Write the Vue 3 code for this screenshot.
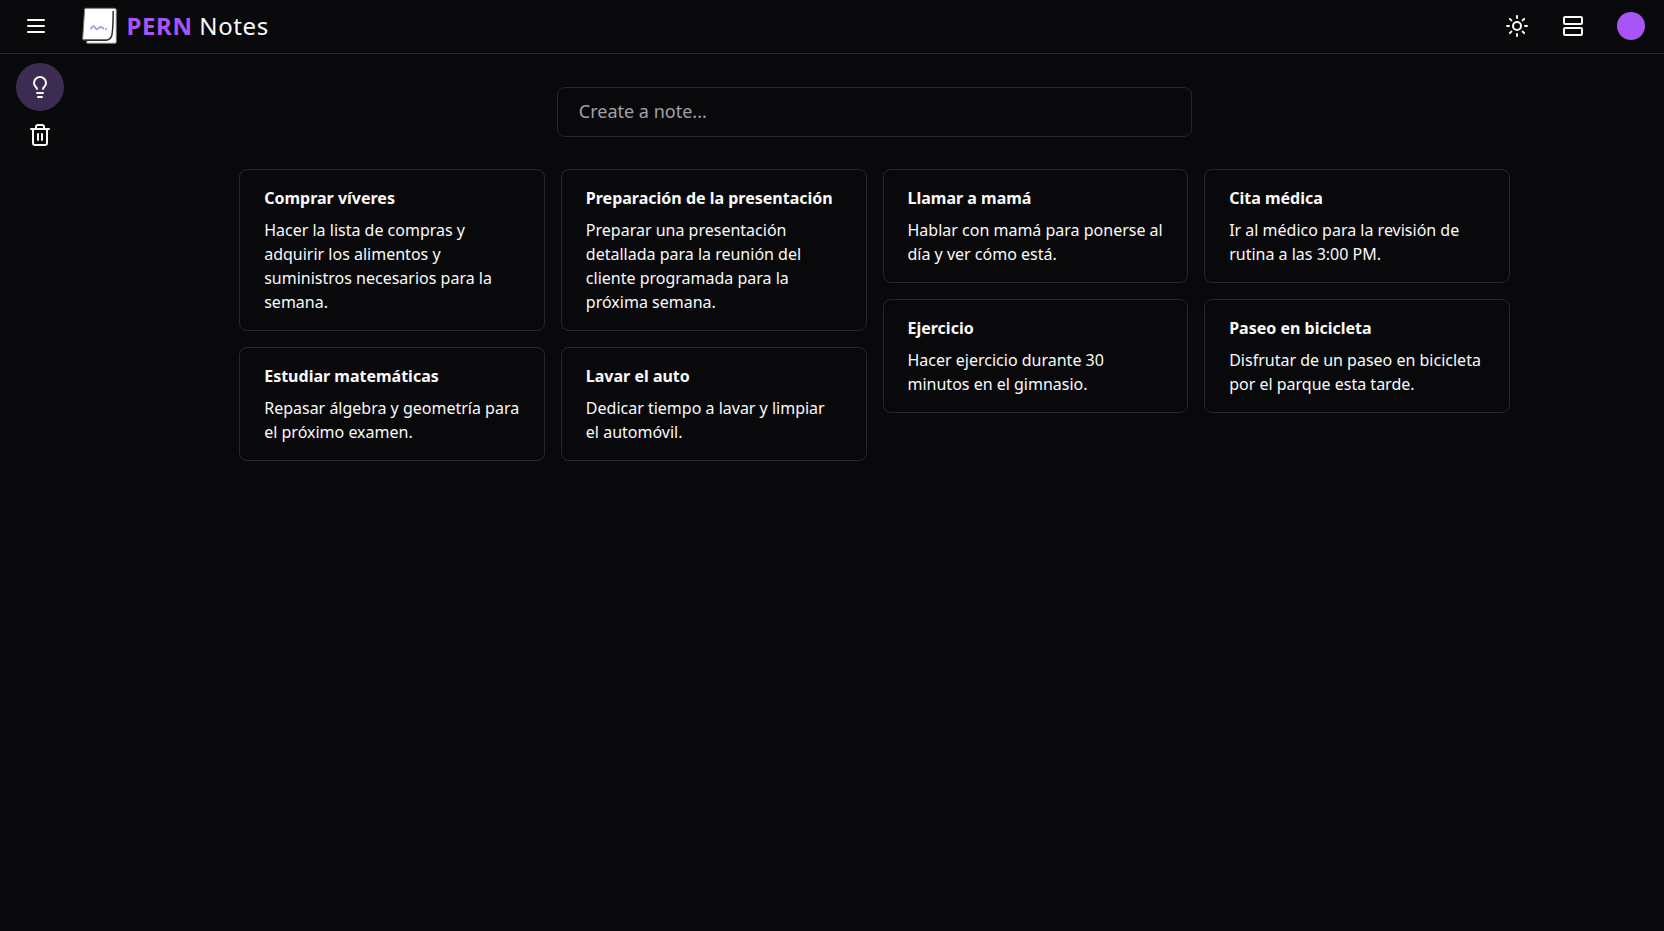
<script setup>
const columns = [
  [
    { title: 'Comprar víveres', body: 'Hacer la lista de compras y adquirir los alimentos y suministros necesarios para la semana.' },
    { title: 'Estudiar matemáticas', body: 'Repasar álgebra y geometría para el próximo examen.' },
  ],
  [
    { title: 'Preparación de la presentación', body: 'Preparar una presentación detallada para la reunión del cliente programada para la próxima semana.' },
    { title: 'Lavar el auto', body: 'Dedicar tiempo a lavar y limpiar el automóvil.' },
  ],
  [
    { title: 'Llamar a mamá', body: 'Hablar con mamá para ponerse al día y ver cómo está.' },
    { title: 'Ejercicio', body: 'Hacer ejercicio durante 30 minutos en el gimnasio.' },
  ],
  [
    { title: 'Cita médica', body: 'Ir al médico para la revisión de rutina a las 3:00 PM.' },
    { title: 'Paseo en bicicleta', body: 'Disfrutar de un paseo en bicicleta por el parque esta tarde.' },
  ],
]
</script>

<template>
  <div class="page">
    <header class="topbar">
      <button class="icon-btn" aria-label="Menu">
        <svg class="icon" viewBox="0 0 24 24">
          <path d="M4 6h16M4 12h16M4 18h16" />
        </svg>
      </button>
      <div class="brand">
        <svg class="logo" width="36" height="38" viewBox="0 0 36 38">
          <path d="M4.800 33V36.300H33Q34.300 36.300 34.300 35V3Q34.300 1.500 33 1.500H30Z" fill="#fff" stroke="#77777b" stroke-width="1" stroke-linejoin="round" />
          <path d="M3.800 1.300H32Q32.500 22 30.300 28.500Q28.500 33 24 33H1.800Q0.500 33 0.700 31.500L2.600 2.500Q2.700 1.300 3.800 1.300Z" fill="#fff" />
          <path d="M24 33H1.800Q0.500 33 0.700 31.500L2.600 2.500Q2.700 1.300 3.800 1.300H32" fill="none" stroke="#77777b" stroke-width="1" />
          <path d="M1.800 33.200H24Q28.500 33 29.800 28.500Q31 24 31.200 4.500" fill="none" stroke="#2d2d30" stroke-width="1.500" stroke-linecap="round" />
          <path d="M9 21.800Q11.200 17.800 12.500 19.800L14.500 22.300Q15.300 22.800 16.500 21.200Q18.500 18.800 20 20.800L21.300 21.400M23.800 21.900h0.600" fill="none" stroke="#b594ea" stroke-width="1.800" stroke-linecap="round" />
        </svg>
        <span class="name"><b>PERN</b> Notes</span>
      </div>
      <div class="actions">
        <button class="icon-btn" aria-label="Theme">
          <svg class="icon" viewBox="0 0 24 24">
            <circle cx="12" cy="12" r="4" />
            <path d="M12 2v2M12 20v2M4.930 4.930l1.410 1.410M17.660 17.660l1.410 1.410M2 12h2M20 12h2M6.340 17.660l-1.410 1.410M19.070 4.930l-1.410 1.410" />
          </svg>
        </button>
        <button class="icon-btn" aria-label="Layout">
          <svg class="icon" viewBox="0 0 24 24">
            <rect x="3" y="3" width="18" height="7" rx="1" />
            <rect x="3" y="14" width="18" height="7" rx="1" />
          </svg>
        </button>
        <div class="avatar"></div>
      </div>
    </header>

    <div class="content">
      <nav class="sidebar">
        <button class="nav-item active" aria-label="Notes">
          <svg class="icon" viewBox="0 0 24 24">
            <path d="M15 14c.2-1 .7-1.700 1.500-2.500 1-.9 1.500-2.200 1.500-3.500A6 6 0 0 0 6 8c0 1 .2 2.200 1.500 3.500.7.7 1.300 1.500 1.500 2.500M9 18h6M10 22h4" />
          </svg>
        </button>
        <button class="nav-item" aria-label="Trash">
          <svg class="icon" viewBox="0 0 24 24">
            <path d="M3 6h18M19 6v14c0 1-1 2-2 2H7c-1 0-2-1-2-2V6M8 6V4c0-1 1-2 2-2h4c1 0 2 1 2 2v2M10 11v6M14 11v6" />
          </svg>
        </button>
      </nav>
      <main>
        <input class="create" type="text" placeholder="Create a note..." />
        <div class="board">
          <div v-for="(col, i) in columns" :key="i" class="col">
            <article v-for="note in col" :key="note.title" class="card">
              <h2>{{ note.title }}</h2>
              <p>{{ note.body }}</p>
            </article>
          </div>
        </div>
      </main>
    </div>
  </div>
</template>

<style>
body { background: #09090b; }
</style>

<style scoped>
.page { box-sizing: border-box; height: 931px; background: #09090b; color: #fafafa; font-family: "Noto Sans", sans-serif; font-size: 16px; line-height: 24px; overflow: hidden; }
button { border: 0; padding: 0; background: none; color: inherit; }
svg { display: block; }
.icon { width: 24px; height: 24px; fill: none; stroke: currentColor; stroke-width: 2; stroke-linecap: round; stroke-linejoin: round; }
.topbar { box-sizing: border-box; height: 54px; padding: 0 19px 1px 24px; border-bottom: 1px solid #27272a; display: flex; align-items: center; }
.brand { display: flex; align-items: center; gap: 8.500px; margin-left: 34px; }
.name { font-size: 24px; line-height: 32px; letter-spacing: 0.6px; }
.name b { color: #a855f7; font-weight: 700; }
.actions { margin-left: auto; display: flex; align-items: center; gap: 32px; }
.avatar { width: 28px; height: 28px; border-radius: 50%; background: #a855f7; }
.content { display: flex; }
.sidebar { width: 80px; box-sizing: border-box; padding: 9px 16px; }
.nav-item { width: 48px; height: 48px; border-radius: 50%; display: flex; align-items: center; justify-content: center; }
.active { background: #3d2c52; }
main { flex: 1; padding: 33px 154.200px 0 159.200px; display: flex; flex-direction: column; align-items: center; gap: 32px; }
.create { box-sizing: border-box; width: 50%; height: 50px; padding: 0 21px 2px; border: 1px solid #27272a; border-radius: 8px; background: transparent; color: #fafafa; font: 18px/28px "Noto Sans", sans-serif; }
.create::placeholder { color: #a1a1aa; opacity: 1; }
.board { width: 100%; display: grid; grid-template-columns: repeat(4, minmax(0, 1fr)); gap: 16px; }
.col { display: flex; flex-direction: column; gap: 16px; }
.card { border: 1px solid #27272a; border-radius: 8px; padding: 16px 24px; }
h2 { margin: 0 0 8px; font-size: 16px; line-height: 24px; font-weight: 700; }
p { margin: 0; }
</style>
